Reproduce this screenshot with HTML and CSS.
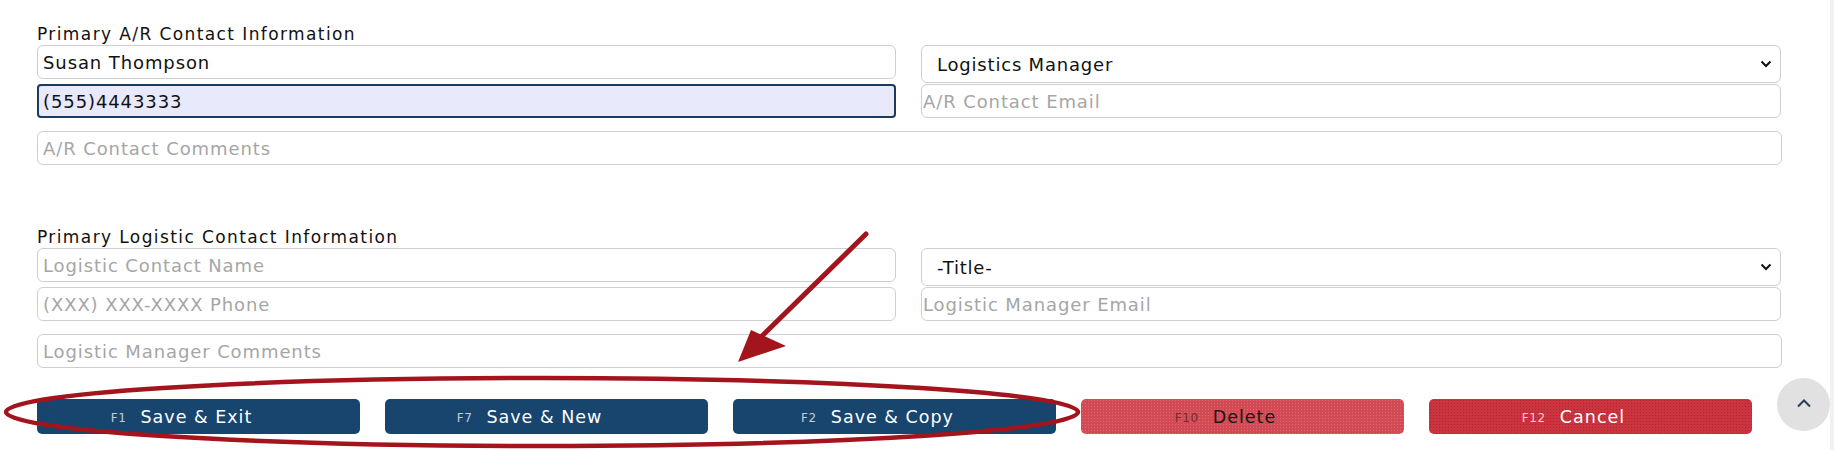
FILE: index.html
```html
<!DOCTYPE html>
<html lang="en">
<head>
<meta charset="utf-8">
<title>Contact Information</title>
<link rel="stylesheet" href="styles.css">
</head>
<body>
<div class="page">
  <form class="form">
    <section class="section section-ar">
      <div class="section-title">Primary A/R Contact Information</div>
      <div class="pair">
        <div class="col">
          <input class="field" type="text" value="Susan Thompson">
          <input class="field field-focus" type="text" value="(555)4443333">
        </div>
        <div class="col">
          <div class="select">
            <span class="select-text">Logistics Manager</span>
            <svg class="select-chev" width="12" height="8" viewBox="0 0 12 8"><path d="M1.5 1.5 L6 6 L10.5 1.5" fill="none" stroke="#111" stroke-width="2"/></svg>
          </div>
          <input class="field field-tight" type="text" placeholder="A/R Contact Email">
        </div>
      </div>
      <input class="field field-wide" type="text" placeholder="A/R Contact Comments">
    </section>

    <section class="section section-log">
      <div class="section-title">Primary Logistic Contact Information</div>
      <div class="pair">
        <div class="col">
          <input class="field" type="text" placeholder="Logistic Contact Name">
          <input class="field" type="text" placeholder="(XXX) XXX-XXXX Phone">
        </div>
        <div class="col">
          <div class="select">
            <span class="select-text">-Title-</span>
            <svg class="select-chev" width="12" height="8" viewBox="0 0 12 8"><path d="M1.5 1.5 L6 6 L10.5 1.5" fill="none" stroke="#111" stroke-width="2"/></svg>
          </div>
          <input class="field field-tight" type="text" placeholder="Logistic Manager Email">
        </div>
      </div>
      <input class="field field-wide" type="text" placeholder="Logistic Manager Comments">
    </section>

    <div class="actions">
      <button type="button" class="btn btn-blue"><span class="key">F1</span>Save &amp; Exit</button>
      <button type="button" class="btn btn-blue"><span class="key">F7</span>Save &amp; New</button>
      <button type="button" class="btn btn-blue"><span class="key">F2</span>Save &amp; Copy</button>
      <button type="button" class="btn btn-delete"><span class="key">F10</span>Delete</button>
      <button type="button" class="btn btn-cancel"><span class="key">F12</span>Cancel</button>
    </div>
  </form>

  <button type="button" class="to-top" aria-label="Back to top">
    <svg width="16" height="10" viewBox="0 0 16 10"><path d="M2 8.5 L8 2.5 L14 8.5" fill="none" stroke="#2b3f57" stroke-width="2"/></svg>
  </button>
  <div class="scroll-track"></div>

  <svg class="annot" width="1834" height="450" viewBox="0 0 1834 450">
    <ellipse cx="542" cy="412" rx="536" ry="34" fill="none" stroke="#a3141d" stroke-width="4.5"/>
    <line x1="866" y1="234" x2="758" y2="340" stroke="#a3141d" stroke-width="5" stroke-linecap="round"/>
    <polygon points="738,362 751,330 786,346" fill="#a3141d"/>
  </svg>
</div>
</body>
</html>
```

FILE: styles.css
```css
* { box-sizing: border-box; }

html, body {
  margin: 0;
  padding: 0;
  background: #ffffff;
}

body {
  font-family: "DejaVu Sans", Verdana, sans-serif;
  color: #111;
  width: 1834px;
  height: 450px;
  overflow: hidden;
}

.page {
  position: relative;
  width: 1834px;
  height: 450px;
}

.form {
  padding: 24px 0 0 37px;
  width: 1782px;
}

.section-title {
  font-size: 17px;
  letter-spacing: 1.4px;
  line-height: 20px;
  height: 21px;
  color: #111;
}

.section-log {
  margin-top: 62px;
}

.pair {
  display: grid;
  grid-template-columns: 859px 860px;
  column-gap: 25px;
}

.col {
  display: flex;
  flex-direction: column;
  gap: 5px;
}

.col + .col {
  gap: 1px;
}

.field {
  display: block;
  width: 100%;
  height: 34px;
  margin: 0;
  padding: 0 5px;
  border: 1px solid #cfcfcf;
  border-radius: 6px;
  background: #fff;
  font-family: "DejaVu Sans", Verdana, sans-serif;
  font-size: 18px;
  letter-spacing: 0.9px;
  color: #111;
  outline: none;
}

.field::placeholder {
  color: #a6a6a6;
}

.field-focus {
  border: 2px solid #1d3a5a;
  border-radius: 4px;
  background: #e8e9fb;
  padding-left: 4px;
}

.field-tight {
  padding-left: 1px;
}

.field-wide {
  margin-top: 13px;
}

.select {
  height: 38px;
  border: 1px solid #cfcfcf;
  border-radius: 6px;
  background: #fff;
  display: flex;
  align-items: center;
  justify-content: space-between;
  padding: 0 8px 0 15px;
  font-size: 18px;
  letter-spacing: 0.8px;
  color: #111;
}

.select-chev {
  display: block;
}

.actions {
  display: flex;
  gap: 25px;
  margin-top: 31px;
}

.btn {
  width: 323px;
  height: 35px;
  border: none;
  border-radius: 5px;
  padding: 0 34px 0 0;
  display: flex;
  align-items: center;
  justify-content: center;
  font-family: "DejaVu Sans", Verdana, sans-serif;
  font-size: 17.5px;
  letter-spacing: 1px;
  color: #fff;
  cursor: pointer;
}

.key {
  font-size: 12px;
  letter-spacing: 0.6px;
  margin-right: 14px;
  margin-top: 3px;
}

.btn-blue {
  background: #17456e;
}

.btn-blue .key {
  color: #c3ccd8;
}

.btn-delete {
  background-color: #d24a53;
  background-image: radial-gradient(circle, rgba(255,255,255,0.18) 0.6px, transparent 0.9px);
  background-size: 3px 3px;
  color: #1d1416;
}

.btn-delete .key {
  color: #7a2b31;
}

.btn-cancel {
  background-color: #c9343f;
  background-image: radial-gradient(circle, rgba(120,0,10,0.3) 0.6px, transparent 0.9px);
  background-size: 3px 3px;
}

.btn-cancel .key {
  color: #f3c9cc;
}

.to-top {
  position: absolute;
  left: 1777px;
  top: 378px;
  width: 53px;
  height: 53px;
  border: none;
  border-radius: 50%;
  background: #e1e1e1;
  display: flex;
  align-items: center;
  justify-content: center;
  padding: 0 0 4px 0;
}

.scroll-track {
  position: absolute;
  right: 0;
  top: 0;
  width: 4px;
  height: 450px;
  background: #f3eff4;
}

.annot {
  position: absolute;
  left: 0;
  top: 0;
  pointer-events: none;
}
```
